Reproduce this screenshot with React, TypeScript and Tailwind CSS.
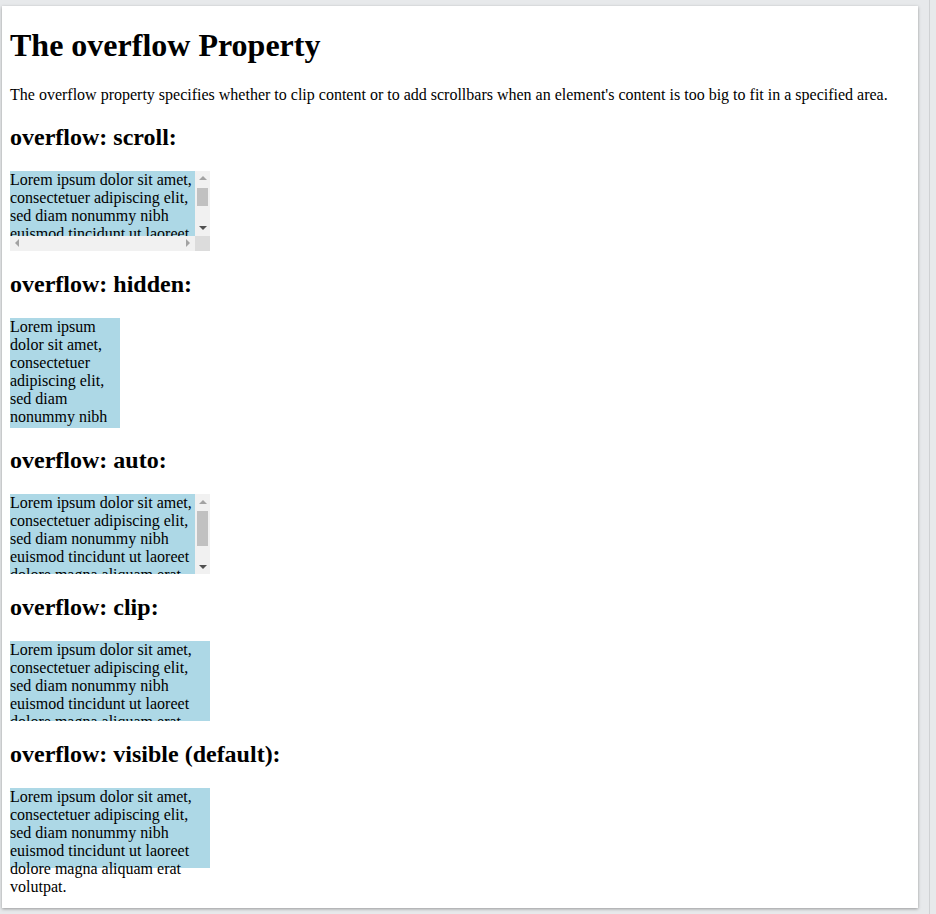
import React from "react";

const lorem =
  "Lorem ipsum dolor sit amet, consectetuer adipiscing elit, sed diam nonummy nibh euismod tincidunt ut laoreet dolore magna aliquam erat volutpat.";

// little triangle for the scrollbar buttons
function Arrow({ dir, color }: { dir: "up" | "down" | "left" | "right"; color: string }) {
  const points = {
    up: "4,1 8,5 0,5",
    down: "0,1 8,1 4,5",
    left: "5,0 5,8 1,4",
    right: "1,0 1,8 5,4",
  }[dir];
  const vertical = dir === "up" || dir === "down";
  return (
    <svg
      width={vertical ? 8 : 6}
      height={vertical ? 6 : 8}
      viewBox={vertical ? "0 0 8 6" : "0 0 6 8"}
    >
      <polygon points={points} fill={color} />
    </svg>
  );
}

function VerticalBar({ thumbTop, thumbHeight }: { thumbTop: number; thumbHeight: number }) {
  return (
    <div className="relative flex h-full w-[15px] shrink-0 flex-col justify-between bg-[#f1f1f1]">
      <div className="flex h-[15px] items-center justify-center">
        <Arrow dir="up" color="#a3a3a3" />
      </div>
      <div
        className="absolute left-[2px] right-[2px] bg-[#c1c1c1]"
        style={{ top: thumbTop, height: thumbHeight }}
      />
      <div className="flex h-[15px] items-center justify-center">
        <Arrow dir="down" color="#505050" />
      </div>
    </div>
  );
}

function LoremText({ className = "" }: { className?: string }) {
  return <div className={`text-base leading-[normal] ${className}`}>{lorem}</div>;
}

function ScrollBox() {
  return (
    <div className="flex h-[80px] w-[200px] flex-col bg-[#add8e6]">
      <div className="flex h-[65px]">
        <LoremText className="h-[65px] w-[185px] overflow-hidden" />
        <VerticalBar thumbTop={17} thumbHeight={18} />
      </div>
      <div className="flex h-[15px]">
        <div className="flex w-[185px] items-center justify-between bg-[#f1f1f1] px-[4px]">
          <Arrow dir="left" color="#a3a3a3" />
          <Arrow dir="right" color="#a3a3a3" />
        </div>
        <div className="w-[15px] bg-[#dcdcdc]" />
      </div>
    </div>
  );
}

function AutoBox() {
  return (
    <div className="flex h-[80px] w-[200px] bg-[#add8e6]">
      <LoremText className="h-[80px] w-[185px] overflow-hidden" />
      <VerticalBar thumbTop={17} thumbHeight={35} />
    </div>
  );
}

const examples: { title: string; box: React.ReactNode }[] = [
  { title: "overflow: scroll:", box: <ScrollBox /> },
  {
    title: "overflow: hidden:",
    box: <LoremText className="h-[110px] w-[110px] overflow-hidden bg-[#add8e6]" />,
  },
  { title: "overflow: auto:", box: <AutoBox /> },
  {
    title: "overflow: clip:",
    box: <LoremText className="h-[80px] w-[200px] overflow-clip bg-[#add8e6]" />,
  },
  {
    title: "overflow: visible (default):",
    box: <LoremText className="h-[80px] w-[200px] overflow-visible bg-[#add8e6]" />,
  },
];

export default function App() {
  return (
    <div className="flex h-[914px] w-[936px] overflow-hidden bg-[#e7e9eb]">
      {/* Result frame */}
      <div
        className="mt-[6px] ml-[2px] h-[902px] w-[916px] overflow-hidden bg-white px-2 text-black shadow-[0_1px_3px_rgba(0,0,0,0.35)]"
        style={{ fontFamily: '"Liberation Serif", "Times New Roman", serif' }}
      >
        <h1 className="my-[21.44px] text-[32px] font-bold leading-[normal]">
          The overflow Property
        </h1>
        <p className="my-4 text-base leading-[normal]">
          The overflow property specifies whether to clip content or to add
          scrollbars when an element's content is too big to fit in a specified
          area.
        </p>

        {examples.map((example, index) => (
          <div key={index}>
            <h2 className="my-[19.92px] text-2xl font-bold leading-[normal]">
              {example.title}
            </h2>
            {example.box}
          </div>
        ))}
      </div>

      {/* Divider strip on the right */}
      <div className="ml-[11px] h-full w-px bg-[#cfd1d3]" />
    </div>
  );
}
